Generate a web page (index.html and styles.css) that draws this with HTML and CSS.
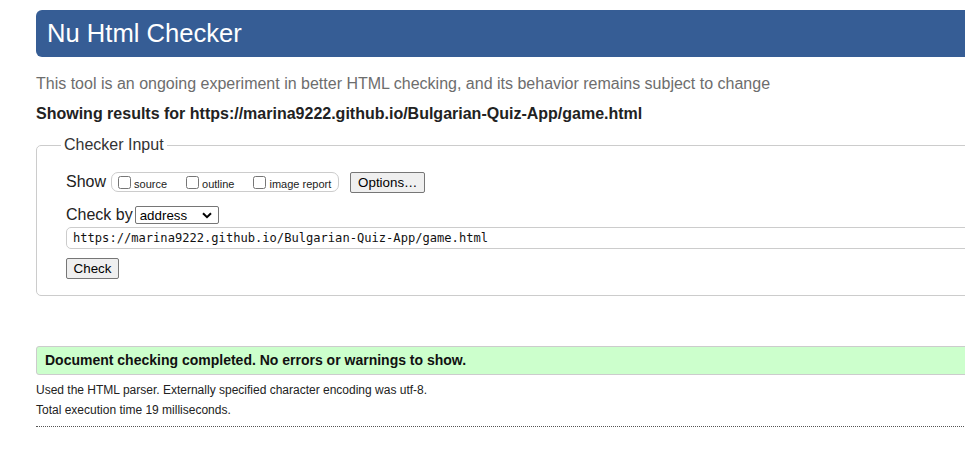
FILE: index.html
```html
<!DOCTYPE html>
<html lang="en">
<head>
<meta charset="utf-8">
<title>Nu Html Checker</title>
<link rel="stylesheet" href="styles.css">
</head>
<body>
<div class="page">
  <h1 class="title">Nu Html Checker</h1>
  <p class="intro">This tool is an ongoing experiment in better HTML checking, and its behavior remains subject to change</p>
  <h2 class="results">Showing results for https://marina9222.github.io/Bulgarian-Quiz-App/game.html</h2>
  <form class="form">
    <fieldset class="input-box">
      <legend class="legend">Checker Input</legend>
      <div class="row show-row">
        <span class="label">Show</span>
        <span class="opts">
          <label class="opt"><input type="checkbox" class="cb"><span>source</span></label>
          <label class="opt"><input type="checkbox" class="cb"><span>outline</span></label>
          <label class="opt last"><input type="checkbox" class="cb"><span>image report</span></label>
        </span>
        <button type="button" class="btn options">Options…</button>
      </div>
      <div class="row by-row">
        <span class="label">Check by</span>
        <span class="select">address
          <svg class="chev" width="10" height="7" viewBox="0 0 10 7"><path d="M1 1.2 L5 5.2 L9 1.2" fill="none" stroke="#000" stroke-width="2"/></svg>
        </span>
      </div>
      <div class="url">https://marina9222.github.io/Bulgarian-Quiz-App/game.html</div>
      <button type="button" class="btn check">Check</button>
    </fieldset>
  </form>
  <p class="success">Document checking completed. No errors or warnings to show.</p>
  <p class="info">Used the HTML parser. Externally specified character encoding was utf-8.</p>
  <p class="info">Total execution time 19 milliseconds.</p>
  <hr class="sep">
</div>
</body>
</html>
```

FILE: styles.css
```css
html, body {
  margin: 0;
  padding: 0;
  background: #fff;
  overflow: hidden;
}
body {
  font-family: "Liberation Sans", Arial, sans-serif;
  color: #222;
}
.page {
  margin-left: 36px;
  width: 1100px;
  padding-top: 10px;
}
.title {
  margin: 0;
  background: #365d95;
  color: #fff;
  font-weight: normal;
  font-size: 25.6px;
  line-height: 47px;
  height: 47px;
  padding-left: 11px;
  border-radius: 6px;
}
.intro {
  margin: 17px 0 0;
  font-size: 16px;
  line-height: 20px;
  color: #6d6d6d;
}
.results {
  margin: 10px 0 0;
  font-size: 16px;
  line-height: 20px;
  font-weight: bold;
  color: #222;
}
.form {
  margin: 11px 0 0;
}
.input-box {
  margin: 0;
  border: 1px solid #ccc;
  border-radius: 5px;
  padding: 0 0 16px 29px;
  min-width: 0;
}
.legend {
  margin-left: -5px;
  padding: 0 3px;
  font-size: 16px;
  line-height: 20px;
  color: #333;
}
.row {
  display: flex;
  align-items: center;
}
.show-row {
  margin-top: 16px;
  height: 22px;
}
.label {
  font-size: 16px;
  color: #222;
}
.opts {
  display: inline-flex;
  align-items: center;
  margin-left: 5px;
  height: 18px;
  border: 1px solid #ccc;
  border-radius: 7px;
  padding: 0 7px 0 6px;
}
.opt {
  display: inline-flex;
  align-items: center;
  font-size: 11px;
  margin-right: 19px;
}
.opt.last {
  margin-right: 0;
}
.cb {
  margin: 0 3px 0 0;
  width: 13px;
  height: 13px;
}
.opt span {
  position: relative;
  top: 2px;
}
.btn {
  font-family: "Liberation Sans", Arial, sans-serif;
  font-size: 13.33px;
  background: #efefef;
  color: #000;
  border: 1px solid #767676;
  border-radius: 2px;
  padding: 0 6px;
  height: 21px;
}
.options {
  margin-left: 11px;
  width: 75px;
}
.by-row {
  margin-top: 12px;
  height: 20px;
}
.select {
  display: inline-flex;
  align-items: center;
  justify-content: space-between;
  margin-left: 2px;
  width: 84px;
  height: 18px;
  box-sizing: border-box;
  border: 1px solid #767676;
  border-radius: 2px;
  padding: 0 6px 0 4px;
  font-size: 13.33px;
  color: #000;
}
.url {
  margin-top: 2px;
  height: 22px;
  box-sizing: border-box;
  border: 1px solid #ccc;
  border-radius: 5px;
  padding-left: 6px;
  font-family: "DejaVu Sans Mono", "Liberation Mono", monospace;
  font-size: 12.1px;
  line-height: 20px;
  color: #111;
}
.check {
  margin-top: 9px;
  width: 53px;
  display: block;
}
.success {
  margin: 50px 0 0;
  height: 29px;
  box-sizing: border-box;
  background: #ccffcc;
  border: 1px solid #ccc;
  border-radius: 3px;
  padding-left: 8px;
  font-size: 14px;
  font-weight: bold;
  line-height: 27px;
  color: #111;
}
.info {
  margin: 8px 0 0;
  font-size: 12px;
  line-height: 14px;
  color: #222;
}
.info + .info {
  margin-top: 6px;
}
.sep {
  margin: 9px 0 0;
  border: 0;
  border-top: 1px dotted #555;
  height: 0;
}
```
